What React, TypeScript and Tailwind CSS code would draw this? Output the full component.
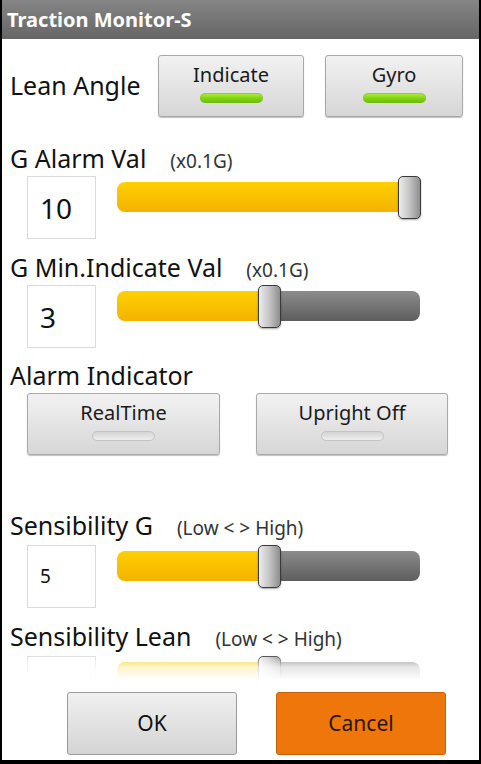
import React from 'react';

const font = "font-['Noto_Sans','Open_Sans',sans-serif]";

function ToggleButton({ label, on, width }: { label: string; on: boolean; width: string }) {
  return (
    <div
      className={`${width} h-[62px] rounded-[3px] border border-[#a8a8a8] bg-gradient-to-b from-[#f2f2f2] to-[#d6d6d6] shadow-[0_1px_1px_rgba(0,0,0,0.25)] flex flex-col items-center pt-[6px]`}
    >
      <span className="text-[20px] leading-[26px] text-[#1a1a1a]">{label}</span>
      <span
        className={
          on
            ? 'mt-[5px] w-[63px] h-[10px] rounded-full bg-gradient-to-b from-[#b8f040] via-[#84d414] to-[#68bc08] shadow-[inset_0_1px_1px_rgba(0,0,0,0.15)]'
            : 'mt-[5px] w-[63px] h-[10px] rounded-full bg-gradient-to-b from-[#d4d4d4] to-[#eeeeee] border border-[#c4c4c4]'
        }
      />
    </div>
  );
}

function Slider({ pos, full }: { pos: number; full?: boolean }) {
  // pos = left offset of the thumb inside the 304px wide track
  return (
    <div className="relative w-[304px] h-[43px]">
      <div className="absolute left-0 top-[6px] w-[303px] h-[30px] rounded-[8px] overflow-hidden flex">
        <div
          className="h-full bg-gradient-to-b from-[#ffd000] to-[#f4b200]"
          style={{ width: full ? 303 : pos + 6 }}
        />
        {!full && <div className="flex-1 h-full bg-gradient-to-b from-[#8c8c8c] to-[#5e5e5e]" />}
      </div>
      <div
        className="absolute top-0 w-[23px] h-[43px] rounded-[5px] border-[1.5px] border-[#3a3a3a] bg-gradient-to-r from-[#ececec] via-[#c4c4c4] to-[#8e8e8e] shadow-[0_1px_2px_rgba(0,0,0,0.35)]"
        style={{ left: pos }}
      />
    </div>
  );
}

function ValueRow({ value, big, pos, full, mt }: { value: string; big?: boolean; pos: number; full?: boolean; mt: string }) {
  return (
    <div className={`flex items-start pl-[25px] ${mt}`}>
      <div className="w-[69px] h-[63px] border border-[#dadada] bg-white flex items-center pl-[12px]">
        <span className={big ? 'text-[28px] text-[#111]' : 'text-[19px] text-[#111]'}>{value}</span>
      </div>
      <div className="ml-[21px]">
        <Slider pos={pos} full={full} />
      </div>
    </div>
  );
}

function Label({ text, note, gap, mt }: { text: string; note?: string; gap: string; mt: string }) {
  return (
    <div className={`pl-[8px] h-[30px] leading-[30px] whitespace-nowrap ${mt}`}>
      <span className="text-[25px] text-[#111]">{text}</span>
      {note && <span className={`text-[19px] text-[#333] ${gap}`}>{note}</span>}
    </div>
  );
}

export default function App() {
  return (
    <div className={`w-[481px] h-[764px] bg-white border-l-2 border-r-2 border-b-4 border-black flex flex-col overflow-hidden ${font}`}>
      <div className="h-[39px] shrink-0 bg-gradient-to-b from-[#858585] to-[#666666] flex items-center pl-[5px]">
        <span className="text-[20px] font-bold text-white">Traction Monitor-S</span>
      </div>

      <div className="relative h-[641px] shrink-0 overflow-hidden">
        <div className="flex items-center mt-[16px]">
          <div className="w-[156px] pl-[8px] text-[25px] text-[#111]">Lean Angle</div>
          <ToggleButton label="Indicate" on width="w-[146px]" />
          <div className="w-[21px]" />
          <ToggleButton label="Gyro" on width="w-[138px]" />
        </div>

        <Label text="G Alarm Val" note="(x0.1G)" gap="ml-[24px]" mt="mt-[26px]" />
        <ValueRow value="10" big pos={281} full mt="mt-[3px]" />

        <Label text="G Min.Indicate Val" note="(x0.1G)" gap="ml-[24px]" mt="mt-[13px]" />
        <ValueRow value="3" big pos={141} mt="mt-[3px]" />

        <Label text="Alarm Indicator" gap="" mt="mt-[12px]" />
        <div className="flex pl-[25px] mt-[3px] gap-[36px]">
          <ToggleButton label="RealTime" on={false} width="w-[193px]" />
          <ToggleButton label="Upright Off" on={false} width="w-[192px]" />
        </div>

        <Label text="Sensibility G" note="(Low < > High)" gap="ml-[24px]" mt="mt-[55px]" />
        <ValueRow value="5" pos={141} mt="mt-[5px]" />

        <Label text="Sensibility Lean" note="(Low < > High)" gap="ml-[24px]" mt="mt-[13px]" />
        <ValueRow value="5" pos={141} mt="mt-[5px]" />

        <div className="absolute left-0 right-0 bottom-0 h-[26px] bg-gradient-to-b from-white/0 via-white/80 to-white" />
      </div>

      <div className="flex-1 flex pl-[65px] pt-[12px] gap-[39px]">
        <div className="w-[170px] h-[63px] rounded-[3px] border border-[#9a9a9a] bg-gradient-to-b from-[#f0f0f0] to-[#d4d4d4] flex items-center justify-center text-[21px] text-[#111]">
          OK
        </div>
        <div className="w-[170px] h-[63px] rounded-[3px] border border-[#c86008] bg-[#ef760a] flex items-center justify-center text-[21px] text-[#2a1606]">
          Cancel
        </div>
      </div>
    </div>
  );
}
